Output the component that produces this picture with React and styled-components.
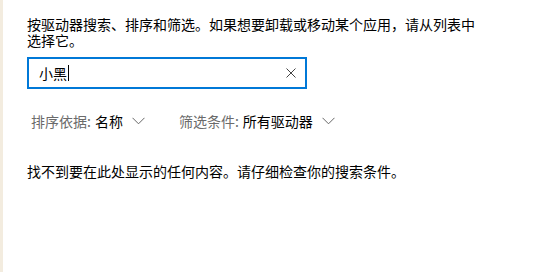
import React from "react";
import styled, { createGlobalStyle } from "styled-components";

const Global = createGlobalStyle`
  html, body { margin: 0; padding: 0; background: #fff; }
  body { font-family: "Noto Sans CJK SC", "Noto Sans", sans-serif; }
`;

const Page = styled.div`
  display: flex;
  width: 537px;
  height: 272px;
  overflow: hidden;
`;

const Strip = styled.div`
  width: 3px;
  flex: none;
  background: #f3ecdf;
`;

const Content = styled.div`
  flex: 1;
  padding: 16px 0 0 24px;
  color: #000;
  font-size: 14px;
  line-height: 16px;
`;

const Intro = styled.p`
  margin: 0;
  width: 452px;
`;

const SearchBox = styled.div`
  box-sizing: border-box;
  margin-top: 9px;
  width: 280px;
  height: 32px;
  border: 2px solid #0078d7;
  display: flex;
  align-items: center;
  padding: 0 9px 0 10px;
`;

const Query = styled.span`
  flex: 1;
  font-size: 14px;
  display: flex;
  align-items: center;
`;

const Caret = styled.span`
  display: inline-block;
  width: 1px;
  height: 16px;
  background: #000;
  margin-left: 1px;
`;

const ClearBtn = styled.span`
  width: 11px;
  height: 11px;
  display: flex;
  align-items: center;
  justify-content: center;
`;

const SortRow = styled.div`
  display: flex;
  gap: 34px;
  margin-top: 22px;
  padding-left: 4px;
  height: 20px;
  align-items: center;
`;

const Dropdown = styled.div`
  display: flex;
  align-items: center;
  font-size: 14px;
`;

const Label = styled.span`
  color: #6b6b6b;
`;

const Value = styled.span`
  color: #000;
  margin-left: 4px;
`;

const Chevron = styled.svg`
  margin-left: 9px;
  width: 13px;
  height: 8px;
`;

const Empty = styled.p`
  margin: 32px 0 0;
`;

const Drop = ({ label, value }) => (
  <Dropdown>
    <Label>{label}</Label>
    <Value>{value}</Value>
    <Chevron viewBox="0 0 13 8">
      <path d="M0.5 0.8 L6.5 6.8 L12.5 0.8" fill="none" stroke="#666" strokeWidth="1" />
    </Chevron>
  </Dropdown>
);

export default function App() {
  return (
    <Page>
      <Global />
      <Strip />
      <Content>
        <Intro>按驱动器搜索、排序和筛选。如果想要卸载或移动某个应用，请从列表中选择它。</Intro>
        <SearchBox>
          <Query>
            小黑
            <Caret />
          </Query>
          <ClearBtn>
            <svg width="10" height="10" viewBox="0 0 10 10">
              <path d="M0.5 0.5 L9.5 9.5 M9.5 0.5 L0.5 9.5" stroke="#444" strokeWidth="1" />
            </svg>
          </ClearBtn>
        </SearchBox>
        <SortRow>
          <Drop label="排序依据:" value="名称" />
          <Drop label="筛选条件:" value="所有驱动器" />
        </SortRow>
        <Empty>找不到要在此处显示的任何内容。请仔细检查你的搜索条件。</Empty>
      </Content>
    </Page>
  );
}
